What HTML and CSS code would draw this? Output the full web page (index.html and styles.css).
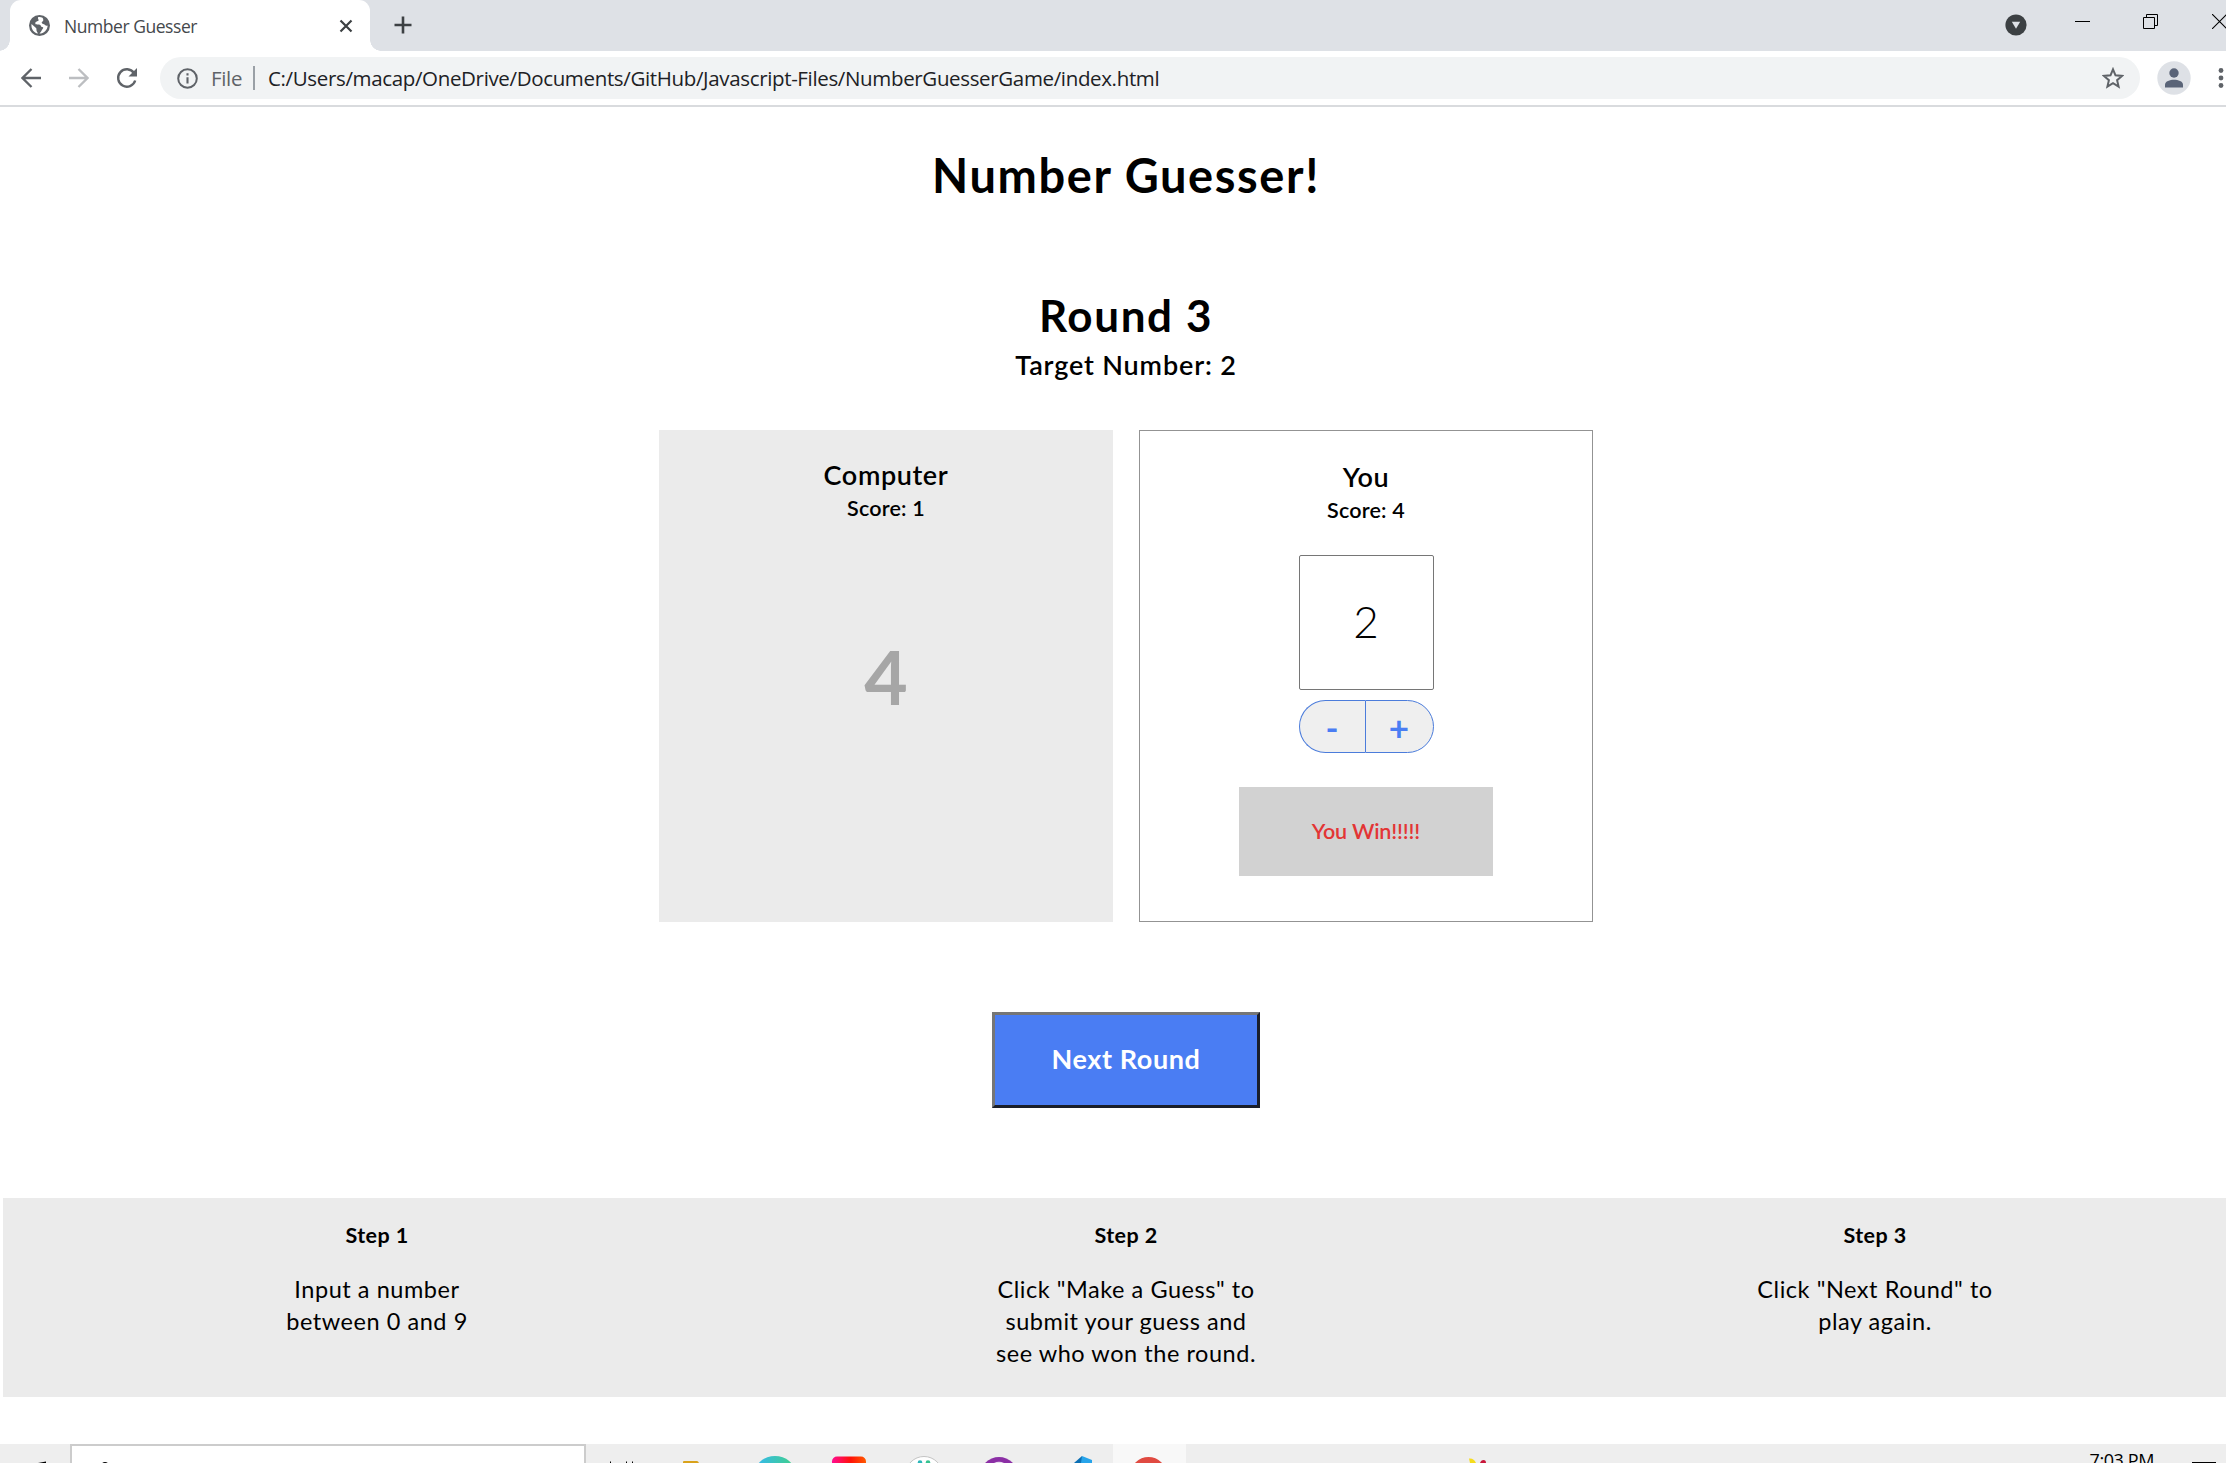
FILE: index.html
```html
<!DOCTYPE html>
<html lang="en">
<head>
<meta charset="utf-8">
<title>Number Guesser</title>
<link rel="stylesheet" href="styles.css">
</head>
<body>
<div class="window">
  <div class="tabstrip">
    <div class="tab">
      <svg class="globe" width="21" height="21" viewBox="0 0 21 21"><circle cx="10.5" cy="10.5" r="10.5" fill="#5f6368"/><path d="M9 2.2 C8.500 4 10 4.300 9.500 5.600 C9 6.800 6.500 6.300 6.300 8.300 C6.200 9.800 8 9.300 10 9.400 C12.300 9.500 11.500 11.800 13.200 12 C14.500 12.200 14.500 13 13.600 14 C12.500 15.200 12.200 17 10.500 18.600 C14.500 18.700 18.500 15 18.700 10.500 C17.500 11 16.500 10.600 15.800 9.700 C15 8.600 13 9.500 12.700 7.800 C12.500 6.300 14.500 6.600 14.300 5 C14.200 4 14 3.500 13.500 2.800 C12 2 10.500 1.900 9 2.200Z M2.500 9 L7.300 13.200 L7.600 16 L9 18.500 C5 18 1.800 14 2.500 9Z" fill="#fff"/></svg>
      <span class="tab-title">Number Guesser</span>
      <svg class="tab-close" width="14" height="14" viewBox="0 0 14 14"><path d="M1.500 1.500L12.500 12.500M12.500 1.500L1.500 12.500" stroke="#3c4043" stroke-width="2.200"/></svg>
    </div>
    <svg class="new-tab" width="18" height="18" viewBox="0 0 18 18"><path d="M9 .5V17.500M.5 9H17.500" stroke="#3c4043" stroke-width="2.600"/></svg>
    <div class="controls">
      <svg class="caret" width="22" height="22" viewBox="0 0 22 22"><circle cx="11" cy="11" r="10.600" fill="#3c4043"/><path d="M6.800 7.800H15.200L11 14.800Z" fill="#dee1e6"/></svg>
      <svg class="minimize" width="15" height="15" viewBox="0 0 15 15"><path d="M0 7.500H15" stroke="#000"/></svg>
      <svg class="restore" width="15" height="15" viewBox="0 0 15 15"><path d="M.5 3.500H11.500V14.500H.5ZM3.500 3.500V.5H14.500V11.500H11.500" fill="none" stroke="#000"/></svg>
      <svg class="close" width="15" height="15" viewBox="0 0 15 15"><path d="M0 0L15 15M15 0L0 15" stroke="#000" stroke-width="1.100"/></svg>
    </div>
  </div>
  <div class="toolbar">
    <svg class="back" width="20" height="20" viewBox="0 0 20 20"><path d="M20 10H2M10.500 1L1.500 10L10.500 19" fill="none" stroke="#5f6368" stroke-width="2.300"/></svg>
    <svg class="forward" width="20" height="20" viewBox="0 0 20 20"><path d="M0 10H18M9.500 1L18.500 10L9.500 19" fill="none" stroke="#bcbec1" stroke-width="2.300"/></svg>
    <svg class="reload" width="22" height="22" viewBox="0 0 22 22"><path d="M18 6A8.700 8.700 0 1 0 19.200 13.500" fill="none" stroke="#5f6368" stroke-width="2.400"/><path d="M21 1V9.500H12.500Z" fill="#5f6368"/></svg>
    <div class="omnibox">
      <svg class="info" width="21" height="21" viewBox="0 0 21 21"><circle cx="10.500" cy="10.500" r="9.300" fill="none" stroke="#5f6368" stroke-width="2"/><path d="M10.500 9.200V15.500M10.500 5.300V7.400" stroke="#5f6368" stroke-width="2.100"/></svg>
      <span class="scheme">File</span>
      <span class="divider"></span>
      <span class="url">C:/Users/macap/OneDrive/Documents/GitHub/Javascript-Files/NumberGuesserGame/index.html</span>
      <svg class="star" width="22" height="22" viewBox="0 0 22 22"><path d="M11 2.300L13.500 8.300L20 8.900L15.100 13.200L16.600 19.600L11 16.200L5.400 19.600L6.900 13.200L2 8.900L8.500 8.300Z" fill="none" stroke="#5f6368" stroke-width="2"/></svg>
    </div>
    <svg class="avatar" width="34" height="34" viewBox="0 0 34 34"><circle cx="17" cy="17" r="16.700" fill="#dee1e6"/><circle cx="17" cy="12" r="4.700" fill="#5a6478"/><path d="M8 26.500V23.500C8 20.300 13 18.700 17 18.700S26 20.300 26 23.500V26.500Z" fill="#5a6478"/></svg>
    <svg class="menu" width="6" height="22" viewBox="0 0 6 22"><g fill="#5f6368"><circle cx="3" cy="3.500" r="2.400"/><circle cx="3" cy="11" r="2.400"/><circle cx="3" cy="18.500" r="2.400"/></g></svg>
  </div>

  <main class="page">
    <h1 class="title">Number Guesser!</h1>
    <h2 class="round">Round 3</h2>
    <p class="target">Target Number: 2</p>
    <div class="cards">
      <section class="card computer">
        <h3 class="name">Computer</h3>
        <p class="score">Score: 1</p>
        <p class="computer-guess">4</p>
      </section>
      <section class="card human">
        <h3 class="name">You</h3>
        <p class="score">Score: 4</p>
        <div class="guess">2</div>
        <div class="stepper"><button class="step-btn minus">-</button><button class="step-btn plus">+</button></div>
        <div class="result"><span class="result-text">You Win!!!!!</span></div>
      </section>
    </div>
    <button class="next">Next Round</button>
    <div class="steps">
      <div class="step"><h4 class="step-name">Step 1</h4><p class="step-text">Input a number<br>between 0 and 9</p></div>
      <div class="step"><h4 class="step-name">Step 2</h4><p class="step-text">Click "Make a Guess" to<br>submit your guess and<br>see who won the round.</p></div>
      <div class="step"><h4 class="step-name">Step 3</h4><p class="step-text">Click "Next Round" to<br>play again.</p></div>
    </div>
  </main>

  <div class="taskbar">
    <svg class="start" width="70" height="19" viewBox="0 0 70 19"><path d="M38 19L46 17.500V19Z" fill="#000"/></svg>
    <div class="search"><svg width="8" height="3" viewBox="0 0 8 3"><path d="M0 3Q4 -1 8 3Z" fill="#000"/></svg></div>
    <svg width="75" height="19" viewBox="0 0 75 19"><path d="M24.500 17.500V19M40.500 17.500V19M46.500 17.500V19" stroke="#000"/></svg>
    <svg width="75" height="19" viewBox="0 0 75 19"><path d="M22 19V18Q22 17 23 17H36Q37 17 38 19Z" fill="#d9a21b"/></svg>
    <svg width="75" height="19" viewBox="0 0 75 19"><defs><linearGradient id="edge"><stop offset="0" stop-color="#35b8ee"/><stop offset="1" stop-color="#41d089"/></linearGradient></defs><ellipse cx="39" cy="29" rx="20" ry="17" fill="url(#edge)"/></svg>
    <svg width="75" height="19" viewBox="0 0 75 19"><defs><linearGradient id="pink"><stop offset="0" stop-color="#ff0d92"/><stop offset=".55" stop-color="#ff1208"/><stop offset="1" stop-color="#ff5a00"/></linearGradient></defs><rect x="21" y="12.500" width="34" height="30" rx="5" fill="url(#pink)"/></svg>
    <svg width="75" height="19" viewBox="0 0 75 19"><circle cx="38" cy="31" r="18.500" fill="#fff" stroke="#c4c4c4"/><circle cx="34" cy="18.500" r="2.300" fill="#2bb5b8"/><circle cx="42" cy="18.500" r="2.300" fill="#35c28f"/></svg>
    <svg width="75" height="19" viewBox="0 0 75 19"><circle cx="38" cy="32" r="19" fill="#8b2fa5"/><path d="M33 19Q38 16.500 43 19Z" fill="#eadcf0"/></svg>
    <svg width="77" height="19" viewBox="0 0 77 19"><path d="M38 19L46 12V19Z" fill="#0b6fb4"/><path d="M46 12L56 16V19H45Z" fill="#27a4ea"/></svg>
    <div class="active-app"><svg width="73" height="19" viewBox="0 0 73 19"><circle cx="35.500" cy="31" r="18" fill="#e04a41"/></svg></div>
    <svg class="tray-app" width="20" height="19" viewBox="0 0 20 19"><path d="M1 19L0 14.500Q5 14 7 19Z" fill="#f5dc1d"/><path d="M11 19Q12 16 14.500 16T17 19Z" fill="#c9173a"/></svg>
    <span class="clock">7:03 PM</span>
    <svg class="notify" width="24" height="19" viewBox="0 0 24 19"><path d="M0 18.500H24" stroke="#000"/></svg>
  </div>
</div>
</body>
</html>
```
FILE: styles.css
```css
* { box-sizing: border-box; }
body { margin: 0; background: #fff; }
h1, h2, h3, h4, p { margin: 0; font-weight: 600; }
svg { display: block; flex: none; }
.window { width: 2226px; height: 1463px; overflow: hidden; display: flex; flex-direction: column; font-family: "Open Sans", sans-serif; }

/* Browser chrome */
.tabstrip { height: 51px; background: #dee1e6; display: flex; flex: none; }
.tab { position: relative; width: 360px; margin-left: 10px; background: #fff; border-radius: 11px 11px 0 0; display: flex; align-items: center; padding: 0 17px 0 19px; }
.tab::before, .tab::after { content: ""; position: absolute; bottom: 0; width: 11px; height: 11px; }
.tab::before { left: -11px; background: radial-gradient(circle at 0 0, transparent 10.5px, #fff 11px); }
.tab::after { right: -11px; background: radial-gradient(circle at 100% 0, transparent 10.5px, #fff 11px); }
.tab-title { font-size: 17.5px; letter-spacing: -0.45px; color: #45484c; margin-left: 14px; white-space: nowrap; }
.tab-close { margin-left: auto; }
.new-tab { margin: 16px 0 0 24px; }
.controls { display: flex; margin-left: auto; padding-top: 14px; }
.minimize { margin-left: 48px; }
.restore { margin-left: 53px; }
.close { margin: 0 -1px 0 54px; }
.toolbar { height: 56px; flex: none; border-bottom: 2px solid #d9dbde; display: flex; align-items: center; padding-left: 21px; }
.forward { margin-left: 28px; }
.reload { margin-left: 27px; }
.omnibox { width: 1980px; height: 42px; margin-left: 22px; border-radius: 21px; background: #f1f3f4; display: flex; align-items: center; padding: 0 16px 0 17px; font-size: 20.5px; letter-spacing: -0.35px; white-space: nowrap; }
.scheme { margin-left: 13px; width: 42px; color: #5f6368; }
.divider { width: 2px; height: 24px; background: #9aa0a6; }
.url { margin-left: 13px; color: #202124; }
.star { margin-left: auto; }
.avatar { margin-left: 17px; }
.menu { margin-left: 27px; }

/* Game */
.page { width: 2246px; margin-left: 3px; flex: 1 0 auto; padding-top: 40px; display: flex; flex-direction: column; align-items: center; font-family: Lato, sans-serif; color: #000; }
.title { font-size: 47px; font-weight: 700; line-height: 56px; letter-spacing: 1.6px; }
.round { font-size: 44px; font-weight: 700; line-height: 52px; letter-spacing: 1.6px; margin-top: 86px; }
.target { font-size: 27px; line-height: 34px; letter-spacing: 0.85px; margin-top: 7px; }
.cards { display: flex; gap: 26px; margin-top: 48px; }
.card { width: 454px; height: 492px; display: flex; flex-direction: column; align-items: center; }
.computer { background: #ebebeb; padding-top: 28px; }
.human { border: 1px solid #939393; padding-top: 29px; }
.name { font-size: 27px; line-height: 34px; letter-spacing: 0.6px; }
.score { font-size: 21.5px; line-height: 28px; letter-spacing: 0.2px; margin-top: 2px; }
.computer-guess { font-size: 75px; line-height: 90px; margin-top: 109px; font-weight: 700; color: #a6a6a6; }
.guess { width: 135px; height: 135px; margin-top: 31px; border: 1px solid #767676; border-radius: 2px; font-size: 44px; font-weight: 300; line-height: 130px; text-align: center; }
.stepper { display: flex; width: 135px; height: 53px; margin-top: 10px; }
.step-btn { padding: 0; border: 1px solid #4b7cdb; background: #efefef; color: #4a7df3; font: 700 35px/50px Lato, sans-serif; }
.minus { width: 66px; border-radius: 27px 0 0 27px; border-right-width: 0; }
.plus { width: 69px; border-radius: 0 27px 27px 0; }
.result { width: 254px; height: 89px; margin-top: 34px; padding-bottom: 2px; background: #d2d2d2; display: flex; align-items: center; justify-content: center; }
.result-text { font-size: 21.5px; font-weight: 600; letter-spacing: -0.15px; color: #e33535; }
.next { width: 268px; height: 96px; margin-top: 90px; padding: 0 0 3px; border: 3px solid; border-color: #767676 #1a1e2a #1a1e2a #767676; background: #4a7df3; color: #fff; font: 700 27px/34px Lato, sans-serif; letter-spacing: 0.6px; }
.steps { width: 2247px; height: 199px; margin-top: 90px; padding-top: 22px; background: #ebebeb; display: grid; grid-template-columns: repeat(3, 749px); text-align: center; }
.step-name { font-size: 21.5px; font-weight: 700; line-height: 30px; letter-spacing: 0.4px; }
.step-text { font-size: 23.5px; font-weight: 400; line-height: 32px; letter-spacing: 0.55px; margin-top: 23px; }

/* Taskbar */
.taskbar { height: 19px; flex: none; background: #eee; display: flex; overflow: hidden; }
.search { width: 516px; height: 40px; border: 2px solid #ccc; background: #fff; padding: 15px 0 0 29px; flex: none; }
.active-app { width: 73px; height: 19px; background: #f8f8f8; }
.tray-app { margin-left: 283px; }
.clock { margin-left: auto; font-size: 18px; line-height: 32px; letter-spacing: -0.4px; color: #000; }
.notify { margin: 0 10px 0 38px; }
```
